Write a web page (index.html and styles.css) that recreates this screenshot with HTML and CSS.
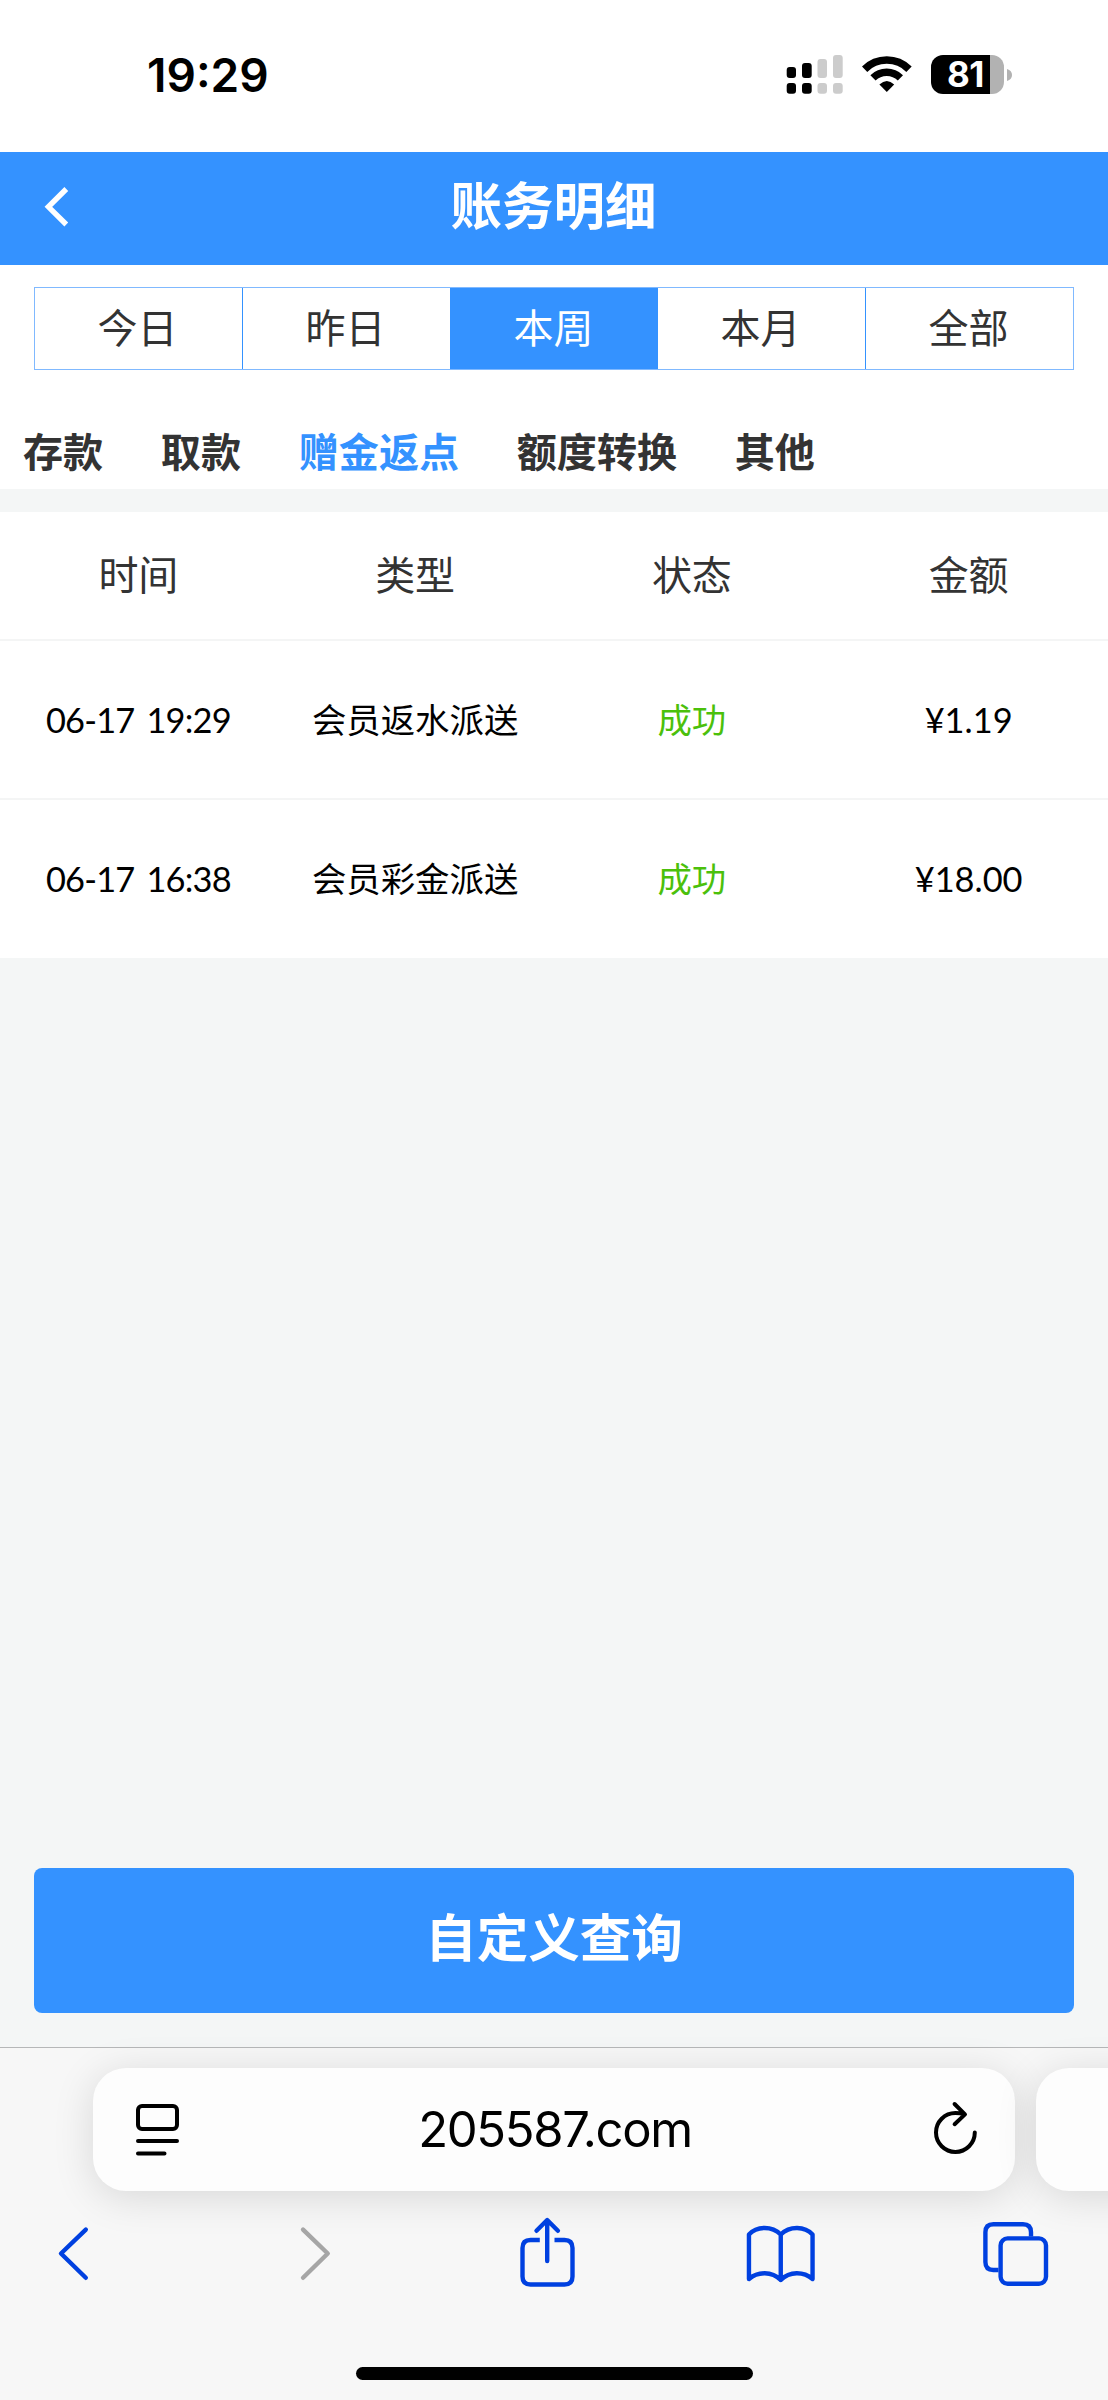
FILE: index.html
```html
<!DOCTYPE html>
<html lang="zh-CN">
<head>
<meta charset="utf-8">
<title>账务明细</title>
<link rel="stylesheet" href="styles.css">
</head>
<body>
<div class="screen">
  <div class="status">
    <div class="clock">19:29</div>
    <div class="indicators">
      <svg class="signal" viewBox="786 54 58 40">
        <g fill="#000"><rect x="786.7" y="67" width="9.3" height="11" rx="3"/><rect x="802" y="63" width="9.7" height="15" rx="3"/><rect x="786.7" y="83" width="9.3" height="10.7" rx="3"/><rect x="802" y="83" width="9.7" height="10.7" rx="3"/></g>
        <g fill="#ccc"><rect x="817.5" y="59" width="9.5" height="19" rx="3"/><rect x="833" y="55" width="9.7" height="23" rx="3"/><rect x="817.5" y="83" width="9.5" height="10.7" rx="3"/><rect x="833" y="83" width="9.7" height="10.7" rx="3"/></g>
      </svg>
      <svg class="wifi" viewBox="862 54 50 40">
        <path d="M864.6 69.2 A31.5 31.5 0 0 1 909 69.2" fill="none" stroke="#000" stroke-width="7.6"/>
        <path d="M873 77.8 A19.5 19.5 0 0 1 900.4 77.8" fill="none" stroke="#000" stroke-width="7.4"/>
        <path d="M879.4 84.6 Q886.8 77.6 894.2 84.6 L886.8 92Z"/>
      </svg>
      <div class="battery"><span class="level">81</span><svg class="nub" viewBox="0 0 5 12"><path d="M0 0Q5 1.5 5 6T0 12Z" fill="#b2b2b2"/></svg></div>
    </div>
  </div>

  <header class="header">
    <svg class="back" viewBox="44 185 26 44"><path d="M66.3 189 L48.4 206.8 L66.3 224.5" fill="none" stroke="#fff" stroke-width="5.4"/></svg>
    <h1>账务明细</h1>
  </header>

  <div class="filters">
    <div class="periods">
      <span class="period">今日</span><span class="period">昨日</span><span class="period active">本周</span><span class="period">本月</span><span class="period">全部</span>
    </div>
    <nav class="kinds">
      <span>存款</span><span>取款</span><span class="current">赠金返点</span><span>额度转换</span><span>其他</span>
    </nav>
  </div>

  <div class="table">
    <div class="row head"><span>时间</span><span>类型</span><span>状态</span><span>金额</span></div>
    <div class="row"><span class="time">06-17 19:29</span><span>会员返水派送</span><span class="ok">成功</span><span>¥1.19</span></div>
    <div class="row"><span class="time">06-17 16:38</span><span>会员彩金派送</span><span class="ok">成功</span><span>¥18.00</span></div>
  </div>

  <div class="action"><div class="query">自定义查询</div></div>

  <footer class="browser">
    <div class="tabstrip">
      <div class="address">
        <svg class="reader" viewBox="135 2103 46 54" fill="none" stroke="#000" stroke-width="4" stroke-linecap="round"><rect x="138" y="2106" width="39" height="23" rx="4"/><path d="M138 2141H177M138 2153.5H164.5"/></svg>
        <span class="url">205587.com</span>
        <svg class="reload" viewBox="932 2100 46 56" fill="none" stroke="#000" stroke-width="4" stroke-linecap="round" stroke-linejoin="round"><path d="M974.8 2131.5A19.4 19.4 0 1 1 955.4 2112.1Q960 2112.1 964.5 2113.2M954.6 2103L965 2113.4L954.6 2123.2"/></svg>
      </div>
      <div class="address next"></div>
    </div>
    <div class="toolbar">
      <svg viewBox="33 2214 80 80"><path d="M85.8 2229.6L61 2253.5L85.8 2277.8"/></svg>
      <svg class="disabled" viewBox="268.75 2214 80 80"><path d="M302.8 2229.6L327.5 2253.5L302.8 2277.8"/></svg>
      <svg viewBox="504.5 2214 80 80"><path class="butt" d="M539.3 2240H530Q522 2240 522 2248V2276.5Q522 2284.5 530 2284.5H564Q572 2284.5 572 2276.5V2248Q572 2240 564 2240H554"/><path d="M546.7 2261V2220.5M536 2230.8L546.7 2220L557.4 2230.8"/></svg>
      <svg viewBox="740.25 2214 80 80"><path d="M781 2280V2234.5M781 2234.5C772 2225.5 757 2226 749.2 2234.5V2279C758 2271.5 772 2271 781 2280C790 2271 804 2271.5 812.8 2279V2234.5C805 2226 790 2225.5 781 2234.5"/></svg>
      <svg viewBox="976 2214 80 80"><path class="butt" d="M998.5 2270H993.4Q985.4 2270 985.4 2262V2232.3Q985.4 2224.3 993.4 2224.3H1023Q1031 2224.3 1031 2232.3V2236.5"/><rect x="1000.6" y="2238.4" width="45.4" height="45.4" rx="7"/></svg>
    </div>
    <div class="home"></div>
  </footer>
</div>
</body>
</html>
```
FILE: styles.css
```css
* { box-sizing: border-box; }
body { margin: 0; background: #f4f7f7; }
.screen {
  width: 1108px; height: 2400px; overflow: hidden;
  display: flex; flex-direction: column;
  background: #f4f6f6; color: #333;
  font-family: Lato, "Noto Sans CJK SC", sans-serif;
}
svg { display: block; flex: none; }

.status { height: 152px; padding: 0 96px 0 147px; background: #fff; display: flex; justify-content: space-between; align-items: flex-start; }
.clock { margin-top: 47px; font: 600 46px/56px Inter, sans-serif; color: #000; letter-spacing: 0; }
.indicators { display: flex; margin-top: 54px; height: 40px; }
.signal { width: 58px; height: 40px; }
.wifi { width: 50px; height: 40px; margin-left: 18px; }
.battery { display: flex; align-items: center; margin-left: 19px; }
.level {
  width: 73px; height: 39px; margin-top: 1px; border-radius: 12px; padding-left: 16px;
  background: linear-gradient(to right, #000 59px, #b2b2b2 59px);
  color: #fff; font: 700 35px/39px Inter, sans-serif; letter-spacing: -0.5px;
}
.nub { width: 5px; height: 12px; margin-left: 3px; margin-top: 1px; }

.header { height: 113px; background: #3492ff; display: flex; align-items: center; padding: 0 44px; }
.back { width: 26px; height: 44px; margin-top: -3px; }
.header h1 { flex: 1; margin: -8px 27px 0 0; text-align: center; color: #fff; font-size: 51.5px; line-height: 80px; font-weight: 600; }

.filters { height: 224px; background: #fff; padding: 22px 34px 0; }
.periods { display: flex; height: 83px; border: 1px solid #80b9ff; }
.period { flex: 1; text-align: center; font-size: 40px; line-height: 80px; padding-right: 2px; border-left: 1px solid #3492ff; }
.period:first-child { border-left: 0; }
.period.active { background: #3492ff; color: #fff; }
.period.active + .period { border-left: 0; }
.kinds { display: flex; gap: 57.7px; margin: 52px 0 0 -11px; font-size: 40.1px; line-height: 60px; font-weight: 600; }
.current { color: #3492ff; }

.table { margin-top: 23px; background: #fff; color: #000; }
.row { display: grid; grid-template-columns: repeat(4, 1fr); height: 159px; padding-right: 1px; border-bottom: 2px solid #f4f5f5; text-align: center; font-size: 34.4px; line-height: 158px; }
.row:last-child { height: 158px; border-bottom: 0; }
.head { height: 129px; font-size: 40px; line-height: 127px; color: #333; }
.time { letter-spacing: -0.8px; word-spacing: 4px; }
.ok { color: #4bc00b; }

.action { margin-top: auto; padding: 0 34px 34px; }
.query { height: 145px; border-radius: 8px; background: #3492ff; color: #fff; text-align: center; font-size: 51.5px; line-height: 138px; font-weight: 600; }

.browser { height: 353px; flex: none; background: #f7f7f7; border-top: 1px solid #b6b7b8; }
.tabstrip { display: flex; gap: 21px; padding: 20px 0 0 93px; }
.address {
  flex: none; width: 922px; height: 123px; border-radius: 33px; background: #fdfdfd;
  display: flex; align-items: center; justify-content: space-between; padding: 0 37px 0 42px;
  box-shadow: 0 6px 40px rgba(0, 0, 0, .13);
}
.reader { width: 46px; height: 54px; }
.url { font: 400 49px/60px Inter, sans-serif; color: #000; letter-spacing: -1.3px; margin-right: 3px; }
.reload { width: 46px; height: 56px; margin-top: -2px; }
.toolbar { display: flex; justify-content: space-between; padding: 0 52px 0 33px; margin-top: 23px; }
.toolbar svg { width: 80px; height: 80px; fill: none; stroke: #0040e0; stroke-width: 4.4; stroke-linecap: round; stroke-linejoin: round; }
.toolbar .disabled { stroke: #a6a6a6; }
.toolbar .butt { stroke-linecap: butt; }
.home { width: 397px; height: 13px; border-radius: 7px; background: #000; margin: 73px auto 0; }
```
